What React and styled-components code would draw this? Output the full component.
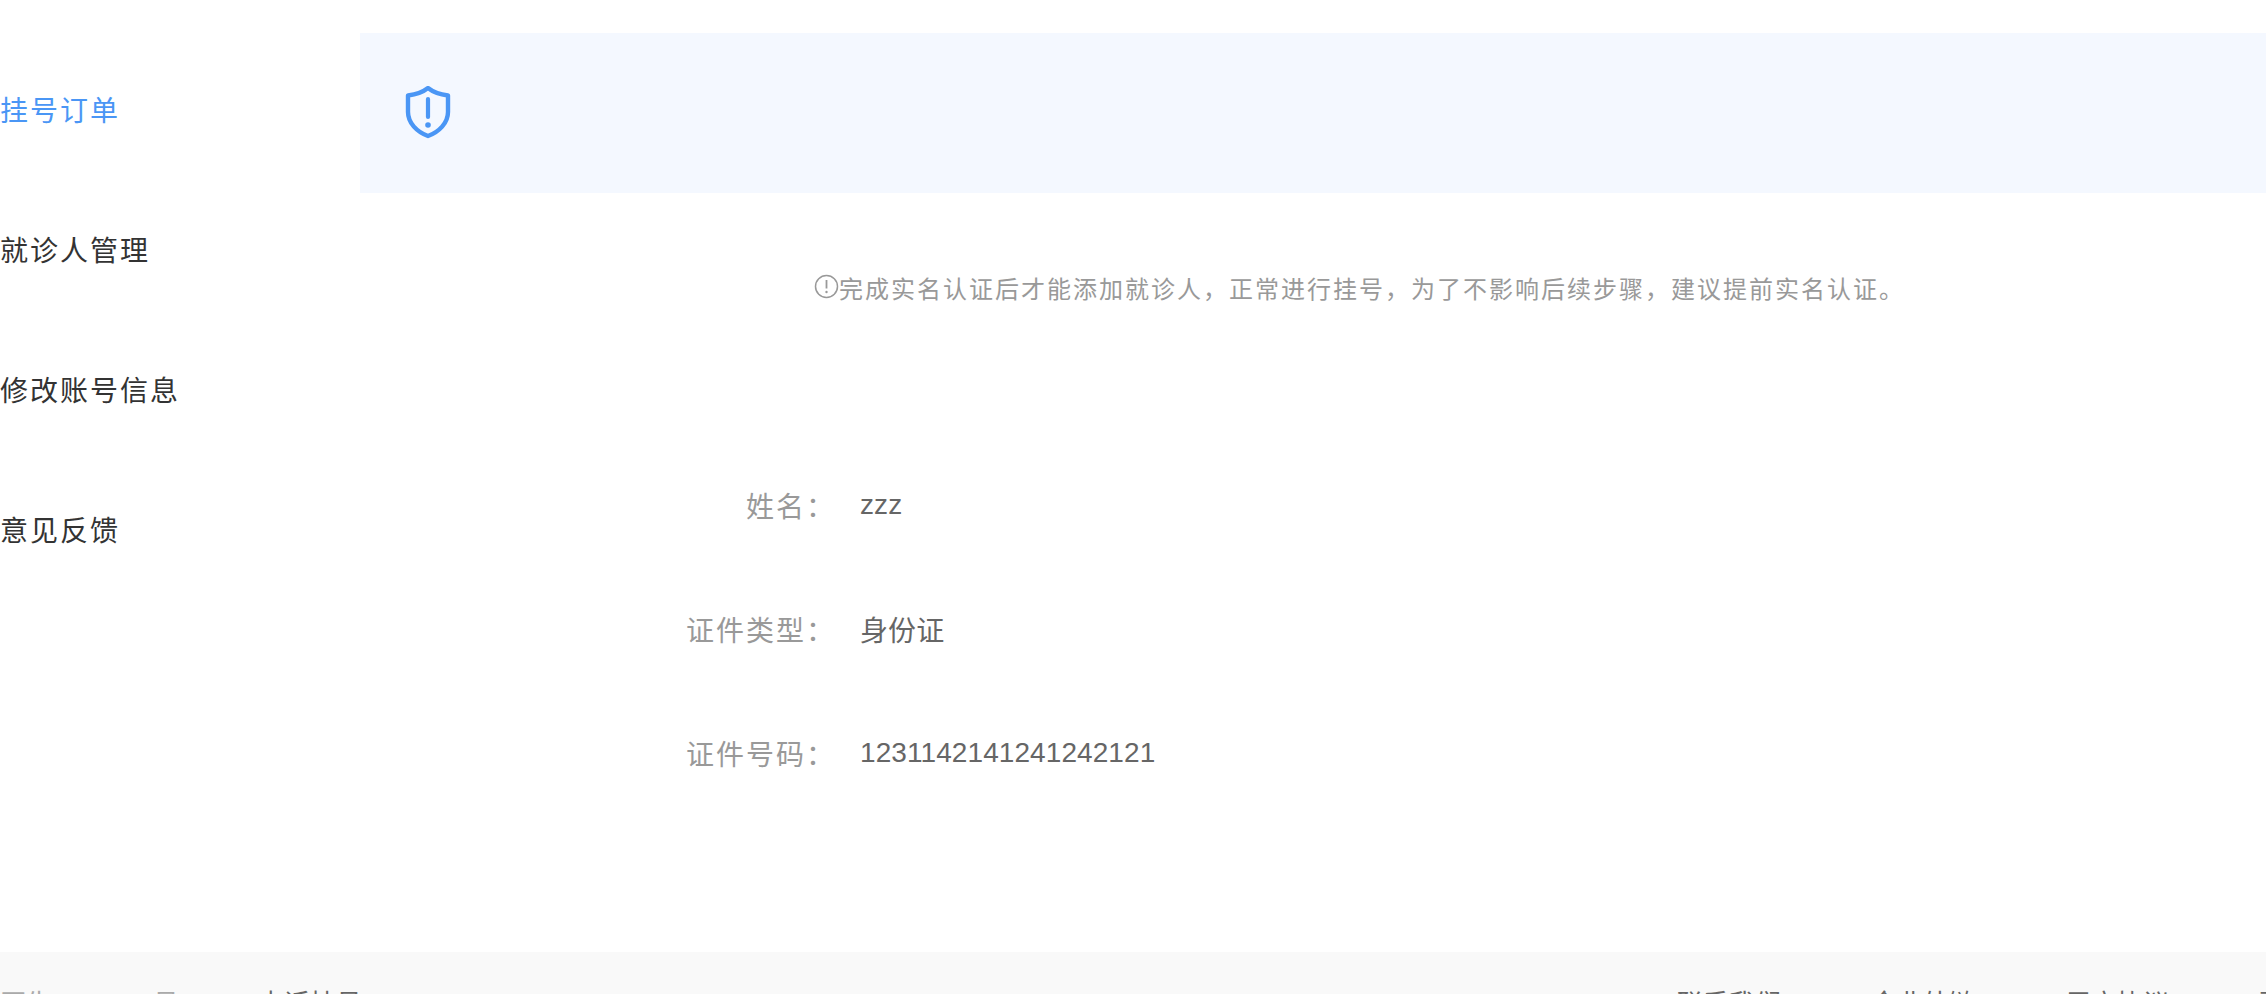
import React from "react";
import styled, { createGlobalStyle } from "styled-components";

const Global = createGlobalStyle`
  html, body { margin: 0; padding: 0; background: #fff; overflow: hidden; }
  body { font-family: "Liberation Sans", "Noto Sans CJK SC", sans-serif; }
`;
const Page = styled.div`
  width: 2266px; height: 994px; overflow: hidden;
  display: flex; flex-direction: column;
`;
const Main = styled.div`
  height: 952px; flex: none; display: flex;
`;
const Side = styled.nav`
  width: 360px; flex: none; padding-top: 42px;
  display: flex; flex-direction: column;
`;
const NavItem = styled.div`
  height: 140px; line-height: 140px; font-size: 28px;
  letter-spacing: 2px;
  color: ${p => (p.$active ? "#4a96f5" : "#333")};
`;
const Content = styled.div`
  flex: 1; padding-top: 33px;
`;
const Banner = styled.div`
  height: 160px; background: #f4f8ff; display: flex; align-items: center;
  padding-left: 45px;
`;
const Notice = styled.div`
  margin-top: 74px; display: flex; align-items: center; justify-content: center;
  padding-left: 93px;
  font-size: 24px; letter-spacing: 2px; color: #999; height: 40px;
`;
const InfoIcon = styled.svg`
  flex: none; margin-top: -2px;
`;
const Form = styled.div`
  margin-top: 136px; padding-left: 326px; display: flex; flex-direction: column;
`;
const Row = styled.div`
  height: 124px; display: flex; align-items: center;
`;
const Label = styled.div`
  width: 150px; text-align: right; font-size: 28px; letter-spacing: 2px; color: #999; flex: none;
`;
const Value = styled.div`
  margin-left: 24px; font-size: 28px; letter-spacing: 0.08px; color: #666;
`;
const Footer = styled.footer`
  height: 42px; flex: none; background: #f9f9f9; overflow: hidden;
`;
const FootRow = styled.div`
  display: flex; padding-top: 37px; font-size: 26px; line-height: 30px; color: #666;
`;
const FootItem = styled.span`
  margin-left: ${p => p.$ml}px; flex: none; color: ${p => p.$c || "#666"};
`;

const Shield = () => (
  <svg width="46" height="54" viewBox="0 1 46 54" fill="none">
    <path d="M23 3 C28 7 35 9.500 43 10.500 V27 C43 38 34 47 23 51 C12 47 3 38 3 27 V10.500 C11 9.500 18 7 23 3 Z" stroke="#4a96f5" strokeWidth="4.400" strokeLinejoin="round" />
    <path d="M23 14 V32" stroke="#4a96f5" strokeWidth="4.200" strokeLinecap="round" />
    <circle cx="23" cy="40" r="2.800" fill="#4a96f5" />
  </svg>
);
const Info = () => (
  <InfoIcon width="25" height="25" viewBox="0 0 25 25" fill="none">
    <circle cx="12.500" cy="12.500" r="11" stroke="#999" strokeWidth="1.500" />
    <path d="M12.500 6 V14.500" stroke="#999" strokeWidth="1.800" />
    <circle cx="12.500" cy="18" r="1.200" fill="#999" />
  </InfoIcon>
);

export default function App() {
  return (
    <Page>
      <Global />
      <Main>
        <Side>
          <NavItem $active>挂号订单</NavItem>
          <NavItem>就诊人管理</NavItem>
          <NavItem>修改账号信息</NavItem>
          <NavItem>意见反馈</NavItem>
        </Side>
        <Content>
          <Banner><Shield /></Banner>
          <Notice><Info />完成实名认证后才能添加就诊人，正常进行挂号，为了不影响后续步骤，建议提前实名认证。</Notice>
          <Form>
            <Row><Label>姓名：</Label><Value>zzz</Value></Row>
            <Row><Label>证件类型：</Label><Value>身份证</Value></Row>
            <Row><Label>证件号码：</Label><Value>1231142141241242121</Value></Row>
          </Form>
        </Content>
      </Main>
      <Footer>
        <FootRow>
          <FootItem $ml={0} $c="#aaa">医生</FootItem>
          <FootItem $ml={101} $c="#aaa">号</FootItem>
          <FootItem $ml={79}>电话挂号</FootItem>
          <FootItem $ml={1315}>联系我们</FootItem>
          <FootItem $ml={90}>企业外链</FootItem>
          <FootItem $ml={90}>用户协议</FootItem>
          <FootItem $ml={90}>更多</FootItem>
        </FootRow>
      </Footer>
    </Page>
  );
}
